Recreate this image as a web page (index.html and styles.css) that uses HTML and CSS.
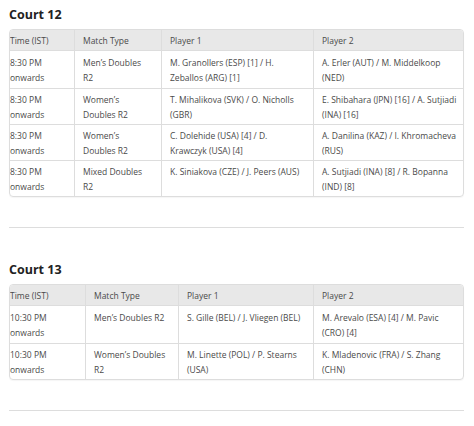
FILE: index.html
```html
<!DOCTYPE html>
<html>
<head>
<meta charset="utf-8">
<link rel="stylesheet" href="styles.css">
</head>
<body>
<div class="page">
  <section class="court">
    <h2 class="court-title">Court 12</h2>
    <table class="sched sched-12">
      <colgroup>
        <col class="c1"><col class="c2"><col class="c3"><col class="c4">
      </colgroup>
      <thead>
        <tr><th>Time (IST)</th><th>Match Type</th><th>Player 1</th><th>Player 2</th></tr>
      </thead>
      <tbody>
        <tr><td>8:30 PM onwards</td><td>Men’s Doubles R2</td><td>M. Granollers (ESP) [1] / H. Zeballos (ARG) [1]</td><td>A. Erler (AUT) / M. Middelkoop (NED)</td></tr>
        <tr><td>8:30 PM onwards</td><td>Women’s Doubles R2</td><td>T. Mihalikova (SVK) / O. Nicholls (GBR)</td><td>E. Shibahara (JPN) [16] / A. Sutjiadi (INA) [16]</td></tr>
        <tr><td>8:30 PM onwards</td><td>Women’s Doubles R2</td><td>C. Dolehide (USA) [4] / D. Krawczyk (USA) [4]</td><td>A. Danilina (KAZ) / I. Khromacheva (RUS)</td></tr>
        <tr><td>8:30 PM onwards</td><td>Mixed Doubles R2</td><td>K. Siniakova (CZE) / J. Peers (AUS)</td><td>A. Sutjiadi (INA) [8] / R. Bopanna (IND) [8]</td></tr>
      </tbody>
    </table>
    <hr class="rule">
  </section>
  <section class="court court-2">
    <h2 class="court-title">Court 13</h2>
    <table class="sched sched-13">
      <colgroup>
        <col class="c1"><col class="c2"><col class="c3"><col class="c4">
      </colgroup>
      <thead>
        <tr><th>Time (IST)</th><th>Match Type</th><th>Player 1</th><th>Player 2</th></tr>
      </thead>
      <tbody>
        <tr><td>10:30 PM onwards</td><td>Men’s Doubles R2</td><td>S. Gille (BEL) / J. Vliegen (BEL)</td><td>M. Arevalo (ESA) [4] / M. Pavic (CRO) [4]</td></tr>
        <tr><td>10:30 PM onwards</td><td>Women’s Doubles R2</td><td>M. Linette (POL) / P. Stearns (USA)</td><td>K. Mladenovic (FRA) / S. Zhang (CHN)</td></tr>
      </tbody>
    </table>
    <hr class="rule">
  </section>
</div>
</body>
</html>
```
FILE: styles.css
```css
html, body {
  margin: 0;
  padding: 0;
  background: #ffffff;
}
body {
  font-family: "Open Sans", "Noto Sans", sans-serif;
  color: #4a4a4a;
}
.page {
  padding: 8px 10px 0 9px;
  width: 455px;
}
.court-title {
  margin: 0 0 7px 0;
  font-size: 12.5px;
  line-height: 14px;
  font-weight: 700;
  color: #222222;
}
.court-2 {
  margin-top: 35px;
}
.sched {
  width: 455px;
  table-layout: fixed;
  border-collapse: separate;
  border-spacing: 0;
  border: 1px solid #dddddd;
  border-radius: 4px;
  overflow: hidden;
  font-size: 8.5px;
  line-height: 15px;
  box-shadow: 0 1px 1px rgba(0,0,0,0.04);
}
.sched th, .sched td {
  text-align: left;
  vertical-align: top;
  padding: 3px 8px 2px 8px;
  border-left: 1px solid #dddddd;
  font-weight: 400;
}
.sched th {
  background: #e8e8e8;
  color: #4a4a4a;
}
.sched td {
  border-top: 1px solid #dddddd;
}
.sched tbody tr:first-child td {
  padding-top: 4px;
  padding-bottom: 3px;
}
.sched th:last-child, .sched td:last-child {
  padding-right: 0;
}
.sched-13 th:last-child, .sched-13 td:last-child {
  padding-right: 14px;
}
.sched th:first-child, .sched td:first-child {
  border-left: none;
  padding-left: 0;
}
.sched-12 .c1 { width: 64px; }
.sched-12 .c2 { width: 87px; }
.sched-12 .c3 { width: 152px; }
.sched-12 .c4 { width: auto; }
.sched-13 .c1 { width: 75px; }
.sched-13 .c2 { width: 93px; }
.sched-13 .c3 { width: 135px; }
.sched-13 .c4 { width: auto; }
.rule {
  margin: 30px 0 0 0;
  border: none;
  border-top: 1px solid #dddddd;
  height: 0;
}
```
